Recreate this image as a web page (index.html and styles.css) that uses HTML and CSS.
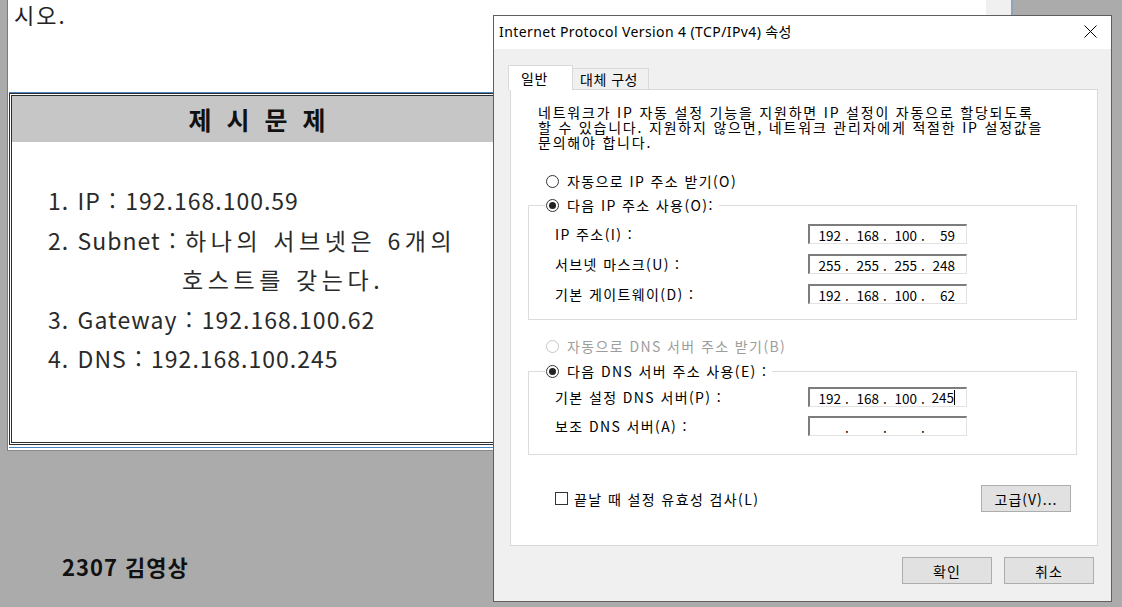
FILE: index.html
```html
<!DOCTYPE html>
<html lang="ko">
<head>
<meta charset="utf-8">
<title>Internet Protocol Version 4 (TCP/IPv4) 속성</title>
<link rel="stylesheet" href="styles.css">
</head>
<body>
<div class="desktop">
  <div class="doc">
    <div class="page">
      <p class="lead">시오.</p>
      <div class="shot">
        <div class="box">
          <div class="box-head">제 시 문 제</div>
          <ul class="box-list">
            <li>1. IP : 192.168.100.59</li>
            <li>2. Subnet : <span class="ko">하나의 서브넷은 6개의</span></li>
            <li class="cont"><span class="ko">호스트를 갖는다.</span></li>
            <li>3. Gateway : 192.168.100.62</li>
            <li>4. DNS : 192.168.100.245</li>
          </ul>
        </div>
      </div>
    </div>
    <div class="scroll"></div>
  </div>
  <p class="author">2307 김영상</p>

  <div class="dialog">
    <div class="titlebar">
      <span class="title">Internet Protocol Version 4 (TCP/IPv4) 속성</span>
      <svg class="close" width="13" height="13" viewBox="0 0 13 13"><path d="M0.5 0.5 L12.5 12.5 M12.5 0.5 L0.5 12.5" stroke="#000" stroke-width="1" fill="none"/></svg>
    </div>
    <div class="dlg-body">
      <div class="tabs">
        <div class="tab active">일반</div>
        <div class="tab">대체 구성</div>
      </div>
      <div class="panel">
        <p class="desc">네트워크가 IP 자동 설정 기능을 지원하면 IP 설정이 자동으로 할당되도록<br>할 수 있습니다. 지원하지 않으면, 네트워크 관리자에게 적절한 IP 설정값을<br>문의해야 합니다.</p>
        <div class="radio-row"><span class="radio"></span><span>자동으로 IP 주소 받기(O)</span></div>
        <fieldset class="group group-ip">
          <legend><span class="radio on"></span><span>다음 IP 주소 사용(O):</span></legend>
          <div class="rows">
            <div class="field"><span class="flabel">IP 주소(I) :</span>
              <div class="ip"><span class="oct">192</span><span class="dot">.</span><span class="oct">168</span><span class="dot">.</span><span class="oct">100</span><span class="dot">.</span><span class="oct">59</span></div></div>
            <div class="field"><span class="flabel">서브넷 마스크(U) :</span>
              <div class="ip"><span class="oct">255</span><span class="dot">.</span><span class="oct">255</span><span class="dot">.</span><span class="oct">255</span><span class="dot">.</span><span class="oct">248</span></div></div>
            <div class="field"><span class="flabel">기본 게이트웨이(D) :</span>
              <div class="ip"><span class="oct">192</span><span class="dot">.</span><span class="oct">168</span><span class="dot">.</span><span class="oct">100</span><span class="dot">.</span><span class="oct">62</span></div></div>
          </div>
        </fieldset>
        <div class="radio-row disabled"><span class="radio"></span><span>자동으로 DNS 서버 주소 받기(B)</span></div>
        <fieldset class="group group-dns">
          <legend><span class="radio on"></span><span>다음 DNS 서버 주소 사용(E) :</span></legend>
          <div class="rows rows-dns">
            <div class="field"><span class="flabel">기본 설정 DNS 서버(P) :</span>
              <div class="ip"><span class="oct">192</span><span class="dot">.</span><span class="oct">168</span><span class="dot">.</span><span class="oct">100</span><span class="dot">.</span><span class="oct caret">245</span></div></div>
            <div class="field"><span class="flabel">보조 DNS 서버(A) :</span>
              <div class="ip"><span class="oct"></span><span class="dot">.</span><span class="oct"></span><span class="dot">.</span><span class="oct"></span><span class="dot">.</span><span class="oct"></span></div></div>
          </div>
        </fieldset>
        <div class="check-row">
          <div class="check"><span class="box-check"></span><span>끝날 때 설정 유효성 검사(L)</span></div>
          <button class="btn" type="button">고급(V)...</button>
        </div>
      </div>
      <div class="footer">
        <button class="btn" type="button">확인</button>
        <button class="btn" type="button">취소</button>
      </div>
    </div>
  </div>
</div>
</body>
</html>
```

FILE: styles.css
```css
html, body {
  margin: 0;
  padding: 0;
}
body {
  width: 1122px;
  height: 607px;
  overflow: hidden;
  background: #ababab;
  font-family: "Noto Sans CJK KR", "Noto Sans", sans-serif;
}
.desktop {
  position: relative;
  width: 1122px;
  height: 607px;
}

/* background document */
.doc {
  margin-left: 7px;
  width: 1006px;
  height: 451px;
  box-sizing: border-box;
  display: flex;
  background: #fff;
  border-left: 1px solid #7b7b7b;
  border-bottom: 1px solid #8a8a8a;
  border-right: 2px solid #8fa3bf;
}
.page {
  flex: 1;
  padding-left: 1px;
}
.scroll {
  width: 25px;
  background: #f0f0f0;
}
.lead {
  margin: 0;
  padding-left: 5px;
  height: 28px;
  font-size: 22px;
  line-height: 28px;
  letter-spacing: 2px;
  color: #222;
}
.shot {
  margin-top: 64px;
  width: 496px;
  border-top: 1px solid #4a86c5;
  border-bottom: 1px solid #4a86c5;
  padding-bottom: 2px;
}
.box {
  height: 352px;
  box-sizing: border-box;
  border: 3px double #2d2d2d;
  background: #fff;
}
.box-head {
  height: 46px;
  background: #c6c6c6;
  text-align: center;
  font-size: 25px;
  font-weight: 700;
  line-height: 46px;
  letter-spacing: 4px;
  padding-left: 4px;
  color: #111;
}
.box-list {
  list-style: none;
  margin: 0;
  padding: 39px 0 0 36px;
  font-size: 23px;
  line-height: 39.5px;
  letter-spacing: 1px;
  word-spacing: 1px;
  color: #2a2a2a;
}
.box-list .ko {
  letter-spacing: 4.6px;
  word-spacing: 0;
}
.box-list .cont {
  padding-left: 134px;
}
.author {
  margin: 100px 0 0 62px;
  font-size: 22px;
  font-weight: 700;
  line-height: 30px;
  letter-spacing: 1px;
  color: #111;
}

/* dialog window */
.dialog {
  position: absolute;
  left: 493px;
  top: 15px;
  width: 619px;
  height: 587px;
  box-sizing: border-box;
  border: 1px solid #5f5f5f;
  background: #f0f0f0;
  font-size: 14px;
  letter-spacing: 1.4px;
  color: #000;
}
.titlebar {
  height: 33px;
  box-sizing: border-box;
  padding: 0 0 3px 5px;
  background: #fff;
  display: flex;
  align-items: center;
  letter-spacing: 0;
}
.title {
  font-family: "Noto Sans", "Noto Sans CJK KR", sans-serif;
  font-size: 14px;
  letter-spacing: 0.4px;
  color: #000;
}
.close {
  margin-left: auto;
  margin-right: 14px;
}
.dlg-body {
  padding: 16px 13px 0 16px;
}
.tabs {
  display: flex;
  align-items: flex-end;
  height: 24px;
  margin-left: -2px;
  position: relative;
  z-index: 1;
  letter-spacing: 0.5px;
}
.tab {
  box-sizing: border-box;
  height: 21px;
  width: 76px;
  padding-left: 7px;
  border: 1px solid #d9d9d9;
  border-bottom: none;
  border-left: none;
  background: #f0f0f0;
  line-height: 20px;
  font-size: 14px;
}
.tab.active {
  height: 25px;
  width: 65px;
  padding-left: 12px;
  margin-bottom: -1px;
  border-left: 1px solid #d9d9d9;
  background: #fff;
  line-height: 24px;
}
.panel {
  width: 588px;
  height: 457px;
  box-sizing: border-box;
  border: 1px solid #d9d9d9;
  background: #fff;
  padding: 15px 20px 0 17px;
}
.desc {
  margin: 0 0 0 10px;
  font-size: 14px;
  line-height: 15px;
  letter-spacing: 1.8px;
  white-space: nowrap;
}
.radio-row {
  display: flex;
  align-items: center;
  gap: 8px;
  height: 20px;
  margin-top: 21px;
  padding-left: 18px;
}
.radio-row.disabled {
  margin-top: 16px;
  color: #9d9d9d;
}
.radio {
  display: inline-flex;
  align-items: center;
  justify-content: center;
  width: 13px;
  height: 13px;
  box-sizing: border-box;
  border: 1px solid #333;
  border-radius: 50%;
  background: #fff;
  flex: none;
}
.disabled .radio {
  border-color: #c6c6c6;
}
.radio.on::after {
  content: "";
  width: 7px;
  height: 7px;
  border-radius: 50%;
  background: #222;
}
.group {
  margin: 4px 0 0 0;
  padding: 0 0 15px 16px;
  border: 1px solid #dcdcdc;
  min-width: 0;
}
.group-dns {
  margin-top: 5px;
  padding-bottom: 18px;
}
.group legend {
  display: flex;
  align-items: center;
  gap: 8px;
  height: 20px;
  padding: 0 5px 0 1px;
}
.rows {
  display: flex;
  flex-direction: column;
  gap: 10px;
  margin-top: 9px;
}
.rows-dns {
  gap: 9px;
  margin-top: 6px;
}
.field {
  display: flex;
  align-items: center;
  height: 20px;
  padding-left: 10px;
}
.flabel {
  width: 253px;
}
.ip {
  display: flex;
  align-items: center;
  width: 159px;
  height: 20px;
  box-sizing: border-box;
  padding-left: 5px;
  border-style: solid;
  border-width: 2px 1px 1px 2px;
  border-color: #7d7d7d #e3e3e3 #e3e3e3 #7d7d7d;
  background: #fff;
  font-size: 13.5px;
  line-height: 16px;
  letter-spacing: 0;
}
.oct {
  width: 26px;
  text-align: right;
}
.dot {
  width: 12px;
  text-align: center;
}
.oct.caret {
  box-sizing: border-box;
  border-right: 1px solid #000;
  height: 15px;
  line-height: 15px;
}
.check-row {
  display: flex;
  align-items: center;
  justify-content: space-between;
  margin-top: 30px;
  padding: 0 6px 0 27px;
  height: 27px;
}
.check {
  display: flex;
  align-items: center;
  gap: 6px;
}
.box-check {
  width: 13px;
  height: 13px;
  box-sizing: border-box;
  border: 1px solid #333;
  background: #fff;
}
.btn {
  width: 90px;
  height: 27px;
  box-sizing: border-box;
  border: 1px solid #adadad;
  background: #e1e1e1;
  font-family: "Noto Sans CJK KR", "Noto Sans", sans-serif;
  font-size: 14px;
  letter-spacing: 1px;
  color: #000;
  padding: 0;
}
.footer {
  display: flex;
  justify-content: flex-end;
  gap: 12px;
  margin-top: 11px;
  padding-right: 4px;
}
```
